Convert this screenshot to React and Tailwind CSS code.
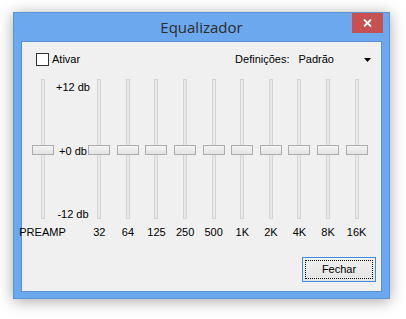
const BANDS = ["32", "64", "125", "250", "500", "1K", "2K", "4K", "8K", "16K"];

function Slider({ label, width }) {
  return (
    <div className={`flex flex-col items-center ${width}`}>
      <div className="relative h-[140px] w-[22px] flex justify-center">
        <div className="h-full w-[4px] bg-[#e9e9e9] border border-[#d4d4d4]"></div>
        <div className="absolute left-0 top-[66px] h-[10px] w-[22px] border border-[#adadad] bg-gradient-to-b from-[#f4f4f4] to-[#e3e3e3]"></div>
      </div>
      <div className="mt-[7px] h-[13px] leading-[13px] whitespace-nowrap">{label}</div>
    </div>
  );
}

export default function App() {
  return (
    <div className="w-[406px] h-[319px] bg-white pt-[12px] pl-[13px] font-['Liberation_Sans',Arial,sans-serif] text-[11px] text-black">
      <div className="w-[377px] h-[287px] bg-[#6ba8ee] border border-[#5b93d6] shadow-[0_2px_14px_rgba(0,0,0,0.35)] flex flex-col">
        {/* title bar */}
        <div className="h-[28px] flex items-start relative">
          <div className="flex-1 text-center pt-[4px] text-[15px] leading-[20px] text-[#2b2b2b] font-['Open_Sans','Noto_Sans',sans-serif]">
            Equalizador
          </div>
          <div className="absolute right-[6px] top-0 w-[31px] h-[20px] bg-[#c75050] flex items-center justify-center">
            <svg width="9" height="8" viewBox="0 0 9 8">
              <path d="M1 0.5 L8 7.5 M8 0.5 L1 7.5" stroke="white" strokeWidth="1.8" />
            </svg>
          </div>
        </div>

        {/* client area */}
        <div className="mx-[7px] mb-[6px] flex-1 bg-[#f0f0f0] border border-[#5a8fd0] flex flex-col">
          <div className="pt-[11px] h-[24px] flex items-center">
            <div className="ml-[14px] w-[13px] h-[13px] bg-white border border-[#333]"></div>
            <span className="ml-[3px] leading-[13px]">Ativar</span>
            <span className="ml-auto leading-[13px]">Definições:</span>
            <span className="ml-[9px] leading-[13px]">Padrão</span>
            <svg className="ml-[30px] mr-[10px]" width="7" height="4" viewBox="0 0 7 4">
              <path d="M0 0 H7 L3.5 4 Z" fill="#000" />
            </svg>
          </div>

          <div className="mt-[13px] flex pl-[9px]">
            <Slider label="PREAMP" width="w-[23px]" />
            <div className="w-[31px] h-[142px] pl-[7px] pt-[2px] flex flex-col justify-between items-center">
              <div className="h-[13px] leading-[13px] whitespace-nowrap">+12 db</div>
              <div className="h-[13px] leading-[13px] whitespace-nowrap">+0 db</div>
              <div className="h-[13px] leading-[13px] whitespace-nowrap">-12 db</div>
            </div>
            {BANDS.map((b) => (
              <Slider key={b} label={b} width="w-[28.6px]" />
            ))}
          </div>

          <div className="mt-[18px] flex justify-end pr-[5px]">
            <button className="w-[74px] h-[25px] border border-[#3c8ee0] bg-gradient-to-b from-[#f0f0f0] to-[#e4e4e4] p-[2px]">
              <div className="w-full h-full border border-dotted border-black flex items-center justify-center leading-[13px]">
                Fechar
              </div>
            </button>
          </div>
        </div>
      </div>
    </div>
  );
}
